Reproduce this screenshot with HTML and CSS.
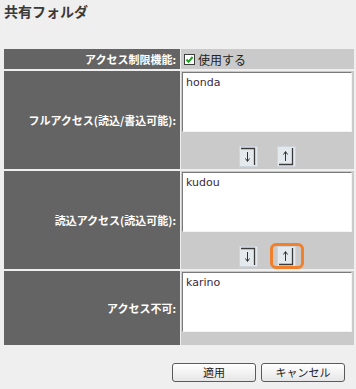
FILE: index.html
```html
<!DOCTYPE HTML>
<html lang="ja">
  <head>
    <title>共有フォルダ</title>
    <meta charset="utf-8">
    <link rel="stylesheet" href="styles.css">
  </head>
  <body>

  <h1 class="title">共有フォルダ</h1>

  <div class="form-table">

    <div class="label">アクセス制限機能:</div>
    <div class="value value-check">
      <span class="check">
        <svg width="11" height="11" viewBox="0 0 11 11">
          <rect x="0.5" y="0.5" width="10" height="10" fill="#ffffff" stroke="#3c3c3c"/>
          <polyline points="2.5,5.5 4.5,7.8 8.6,3" fill="none" stroke="#22a022" stroke-width="2"/>
        </svg>
      </span>
      <span>使用する</span>
    </div>

    <div class="label">フルアクセス(読込/書込可能):</div>
    <div class="value">
      <textarea class="list" readonly>honda</textarea>
      <div class="arrows">
        <button class="arrow" type="button">
          <svg width="19" height="21" viewBox="0 0 19 21">
            <rect x="0.5" y="0.5" width="18" height="20" fill="#e4e9ee" stroke="#cfd5dc"/>
            <polyline points="2,2.5 15.5,2.5 15.5,19" fill="none" stroke="#3a3a3a" stroke-width="1.3"/>
            <line x1="8.5" y1="6" x2="8.5" y2="15" stroke="#333" stroke-width="1"/>
            <polyline points="6.5,12.5 8.5,15.5 10.5,12.5" fill="none" stroke="#333" stroke-width="1"/>
          </svg>
        </button>
        <button class="arrow" type="button">
          <svg width="19" height="21" viewBox="0 0 19 21">
            <rect x="0.5" y="0.5" width="18" height="20" fill="#e4e9ee" stroke="#cfd5dc"/>
            <polyline points="15.5,2 15.5,18.5 2,18.5" fill="none" stroke="#3a3a3a" stroke-width="1.3"/>
            <line x1="8.5" y1="6" x2="8.5" y2="15" stroke="#333" stroke-width="1"/>
            <polyline points="6.5,8.5 8.5,5.5 10.5,8.5" fill="none" stroke="#333" stroke-width="1"/>
          </svg>
        </button>
      </div>
    </div>

    <div class="label">読込アクセス(読込可能):</div>
    <div class="value">
      <textarea class="list" readonly>kudou</textarea>
      <div class="arrows">
        <button class="arrow" type="button">
          <svg width="19" height="21" viewBox="0 0 19 21">
            <rect x="0.5" y="0.5" width="18" height="20" fill="#e4e9ee" stroke="#cfd5dc"/>
            <polyline points="2,2.5 15.5,2.5 15.5,19" fill="none" stroke="#3a3a3a" stroke-width="1.3"/>
            <line x1="8.5" y1="6" x2="8.5" y2="15" stroke="#333" stroke-width="1"/>
            <polyline points="6.5,12.5 8.5,15.5 10.5,12.5" fill="none" stroke="#333" stroke-width="1"/>
          </svg>
        </button>
        <button class="arrow focus" type="button">
          <svg width="19" height="21" viewBox="0 0 19 21">
            <rect x="0.5" y="0.5" width="18" height="20" fill="#e4e9ee" stroke="#cfd5dc"/>
            <polyline points="15.5,2 15.5,18.5 2,18.5" fill="none" stroke="#3a3a3a" stroke-width="1.3"/>
            <line x1="8.5" y1="6" x2="8.5" y2="15" stroke="#333" stroke-width="1"/>
            <polyline points="6.5,8.5 8.5,5.5 10.5,8.5" fill="none" stroke="#333" stroke-width="1"/>
          </svg>
        </button>
      </div>
    </div>

    <div class="label">アクセス不可:</div>
    <div class="value value-last">
      <textarea class="list" readonly>karino</textarea>
    </div>

  </div>

  <div class="actions">
    <button class="btn" type="button">適用</button>
    <button class="btn" type="button">キャンセル</button>
  </div>

  </body>
</html>
```

FILE: styles.css
```css
body {
  margin: 0;
  padding: 0;
  background: #efefef;
  color: #333333;
  font-family: "Noto Sans CJK JP", sans-serif;
  font-size: 11px;
}

.title {
  margin: 0;
  padding: 2px 4px 0;
  height: 18px;
  font-size: 14px;
  line-height: 18px;
  font-weight: bold;
  color: #3a3a3a;
}

.form-table {
  display: grid;
  grid-template-columns: 176px 173px;
  grid-auto-rows: auto;
  column-gap: 1px;
  row-gap: 2px;
  margin: 29px 0 0 4px;
  width: 350px;
}

.label {
  display: flex;
  align-items: center;
  justify-content: flex-end;
  padding-right: 4px;
  background: #646464;
  color: #ffffff;
  font-weight: bold;
  font-size: 11px;
  white-space: nowrap;
}

.value {
  background: #cacaca;
  padding: 1px 0 2px 1px;
}

.value-check {
  display: flex;
  align-items: center;
  gap: 3px;
  height: 20px;
  padding: 0 0 0 3px;
  box-sizing: border-box;
  font-size: 12px;
  color: #222222;
}

.check {
  display: flex;
}

.value-last {
  padding-bottom: 13px;
}

.list {
  display: block;
  box-sizing: border-box;
  width: 170px;
  height: 60px;
  margin: 0;
  padding: 3px 3px;
  border: 1px solid #f4f4f4;
  border-top-color: #7a7a7a;
  border-left-color: #7a7a7a;
  background: #ffffff;
  color: #3a2a3a;
  font-family: "DejaVu Sans", sans-serif;
  font-size: 11px;
  line-height: 13px;
  resize: none;
  overflow: hidden;
  outline: none;
}

.arrows {
  display: flex;
  justify-content: center;
  gap: 19px;
  margin-top: 14px;
  padding-right: 2px;
}

.arrow {
  position: relative;
  display: block;
  width: 19px;
  height: 21px;
  margin: 0;
  padding: 0;
  border: 0;
  background: none;
}

.arrow svg {
  display: block;
}

.arrow.focus::after {
  content: "";
  position: absolute;
  top: -3px;
  bottom: -2px;
  left: -7px;
  right: -8px;
  border: 3px solid #f0802c;
  border-radius: 6px;
}

.actions {
  display: flex;
  justify-content: flex-end;
  gap: 5px;
  margin-top: 18px;
  padding-right: 11px;
}

.btn {
  width: 84px;
  height: 19px;
  margin: 0;
  padding: 0;
  border: 1px solid #5a5a5a;
  border-radius: 3px;
  background: linear-gradient(#ffffff, #e6e6e6);
  color: #222222;
  font-family: "Noto Sans CJK JP", sans-serif;
  font-size: 11px;
  line-height: 17px;
}
```
